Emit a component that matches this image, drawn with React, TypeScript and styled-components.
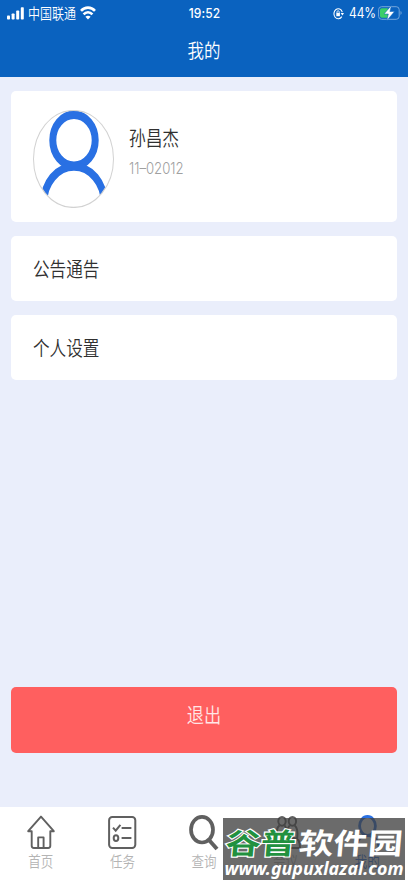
import React from "react";
import styled, { createGlobalStyle } from "styled-components";

const GlobalStyle = createGlobalStyle`
  * { box-sizing: border-box; }
  body {
    margin: 0;
    background: #eaeefb;
    font-family: "Noto Sans CJK SC", "Liberation Sans", sans-serif;
  }
`;

const Screen = styled.div`
  position: relative;
  display: flex;
  flex-direction: column;
  width: 408px;
  height: 883px;
  overflow: hidden;
  background: #eaeefb;
`;

const Header = styled.header`
  height: 77px;
  flex: none;
  background: #0a62bf;
  color: #fff;
`;

const StatusBar = styled.div`
  display: grid;
  grid-template-columns: 1fr auto 1fr;
  align-items: center;
  height: 26px;
  padding: 0 6px 0 7px;
`;

const StatusGroup = styled.div<{ $end?: boolean }>`
  display: flex;
  align-items: center;
  justify-content: ${(p) => (p.$end ? "flex-end" : "flex-start")};
  gap: 4px;
`;

const PowerGroup = styled(StatusGroup)`
  gap: 2px;

  svg:first-child { margin-right: 3px; }
`;

const Label = styled.span<{
  $size: number;
  $color?: string;
  $weight?: number;
  $stretch?: number;
  $latin?: boolean;
  $spacing?: number;
}>`
  display: block;
  font-size: ${(p) => p.$size}px;
  line-height: 24px;
  font-weight: ${(p) => p.$weight ?? 350};
  letter-spacing: ${(p) => p.$spacing ?? 0}px;
  color: ${(p) => p.$color ?? "#fff"};
  white-space: nowrap;
  transform: scaleY(${(p) => p.$stretch ?? 1.2});
  ${(p) => (p.$latin ? 'font-family: Inter, "Liberation Sans", sans-serif;' : "")}
`;

const TitleBar = styled.div`
  display: flex;
  justify-content: center;
  padding-top: 11.5px;
`;

const Content = styled.main`
  display: flex;
  flex-direction: column;
  flex: 1;
  gap: 13.5px;
  padding: 13.5px 11px 54px;
`;

const Card = styled.section`
  display: flex;
  align-items: center;
  height: 65.5px;
  padding: 2px 22px 0;
  border-radius: 5px;
  background: #fff;
`;

const ProfileCard = styled(Card)`
  height: 131.5px;
  align-items: flex-start;
  padding-top: 19px;
  gap: 15px;
`;

const Identity = styled.div`
  display: flex;
  flex-direction: column;
  gap: 6px;
  padding-top: 16.5px;
`;

const Logout = styled.button`
  display: flex;
  justify-content: center;
  height: 66px;
  margin-top: auto;
  padding: 17.5px 0 0;
  border: 0;
  border-radius: 5px;
  background: #ff5f5f;
  font-family: inherit;
`;

const TabBar = styled.nav`
  display: grid;
  grid-template-columns: repeat(5, 1fr);
  height: 76px;
  flex: none;
  background: #fff;
`;

const Tab = styled.div`
  display: flex;
  flex-direction: column;
  align-items: center;
  padding-top: 7.5px;

  svg { height: 37px; }
  span { margin-top: -2.5px; }
`;

const Watermark = styled.div`
  position: absolute;
  left: 223px;
  top: 818px;
  width: 182px;
  height: 62px;
  background: rgba(62, 62, 62, 0.77);

  svg { display: block; overflow: visible; }
`;

const Signal = () => (
  <svg width="17" height="13" viewBox="0 0 17 13" fill="#fff">
    <rect x="0" y="8.6" width="3" height="4" rx="0.8" />
    <rect x="4.6" y="6.4" width="3" height="6.2" rx="0.8" />
    <rect x="9.2" y="3.4" width="3" height="9.2" rx="0.8" />
    <rect x="13.8" y="0.2" width="3" height="12.4" rx="0.8" />
  </svg>
);

const Wifi = () => (
  <svg width="16" height="14" viewBox="0 0 16 14" fill="none" stroke="#fff" strokeWidth="2.6">
    <path d="M1 4.8C4.9.5 11.1.5 15 4.8" />
    <path d="M3.6 8.3c2.5-2.8 6.3-2.8 8.8 0" />
    <path d="M8 13.5 5.4 10.7c1.5-1.4 3.7-1.4 5.2 0Z" fill="#fff" stroke="none" />
  </svg>
);

const RotationLock = () => (
  <svg width="11" height="13" viewBox="0 0 11 13" fill="none" stroke="#fff" strokeWidth="1.1">
    <path d="M8.8 9.6A4.3 5 0 1 1 9.3 5.2" />
    <path d="M7.6 6h3.4L9.4 8.6Z" fill="#fff" stroke="none" />
    <rect x="3.3" y="5.9" width="3.6" height="3.3" fill="#fff" stroke="none" />
    <path d="M4 6V4.9a1.1 1.2 0 0 1 2.2 0V6" strokeWidth=".8" />
  </svg>
);

const Battery = () => (
  <svg width="24" height="16" viewBox="0 0 24 16">
    <rect x=".6" y="1.7" width="20.6" height="12.6" rx="3" fill="none" stroke="#75a7dc" />
    <path d="M3.8 3.3h6v9.4h-6A1.8 1.8 0 0 1 2 10.9V5.1a1.8 1.8 0 0 1 1.8-1.8Z" fill="#3bce68" />
    <path d="M22.5 6c1.5.7 1.5 3.2 0 3.9Z" fill="#75a7dc" />
    <path d="M13.4.4 6 9h4.3L8.9 15.5 16.5 6.5h-4.6Z" fill="#fff" stroke="#0a62bf" strokeWidth=".5" />
  </svg>
);

const Avatar = () => (
  <svg width="81" height="98" viewBox="0 0 81 81.67" preserveAspectRatio="none">
    <defs>
      <clipPath id="avatarClip"><ellipse cx="40.5" cy="40.8" rx="40" ry="40.4" /></clipPath>
    </defs>
    <g clipPath="url(#avatarClip)" fill="none" stroke="#2970e3" strokeWidth="7">
      <circle cx="41" cy="25.2" r="21.2" />
      <circle cx="41" cy="77.4" r="30.2" />
    </g>
    <ellipse cx="40.5" cy="40.8" rx="40" ry="40.4" fill="none" stroke="#d2d2d2" strokeWidth="1" />
  </svg>
);

const HomeIcon = () => (
  <svg width="30" viewBox="0 0 30 37" fill="none" stroke="#606060" strokeWidth="1.9" strokeLinejoin="round">
    <path d="M5.7 16.2H2.2L15 1.6l12.8 14.6h-3.5v14.6c0 1.4-.8 2.2-2.2 2.2H7.9c-1.4 0-2.2-.8-2.2-2.2Z" />
    <path d="M12.2 33V22.4h5.4V33" />
  </svg>
);

const TasksIcon = () => (
  <svg width="30" viewBox="0 0 30 37" fill="none" stroke="#606060" strokeWidth="2">
    <rect x="2.1" y="2.1" width="26.2" height="30.8" rx="3.2" />
    <path d="m6 12.6 2.7 3 4.7-5.8M14.6 13h9.8M14.6 23h9.8" />
    <ellipse cx="9" cy="23.1" rx="2.3" ry="2.9" />
  </svg>
);

const SearchIcon = () => (
  <svg width="30" viewBox="0 0 30 37" fill="none" stroke="#606060" strokeWidth="3.7">
    <ellipse cx="13" cy="14.7" rx="11" ry="12.8" />
    <path d="m20 25 8 9" strokeWidth="4" />
  </svg>
);

const MeetingIcon = () => (
  <svg width="30" viewBox="0 0 30 37" fill="none" stroke="#606060" strokeWidth="2">
    <ellipse cx="11" cy="6.3" rx="3.7" ry="4.4" />
    <ellipse cx="21.4" cy="6.3" rx="3.7" ry="4.4" />
    <path d="M8.5 10.4C5 13 5.5 20 6 24M13.5 10.4c2 2 2.5 4 2.6 7 .1-3 .6-5 2.6-7M23.7 10.4c3.5 3 3 9 2.5 13M3 33c0-7 3-10 7-10s6 3 6 10c0-7 3-10 7-10s6 3 6 10Z" />
  </svg>
);

const MineIcon = () => (
  <svg width="30" viewBox="0 0 30 37" fill="none" stroke="#2970e3" strokeWidth="2.8">
    <ellipse cx="15.5" cy="11" rx="7.9" ry="9.5" />
    <path d="M4 32c1.5-15.5 21.5-15.5 23 0" />
  </svg>
);

const tabs = [
  { name: "首页", Icon: HomeIcon },
  { name: "任务", Icon: TasksIcon },
  { name: "查询", Icon: SearchIcon },
  { name: "会议", Icon: MeetingIcon },
  { name: "我的", Icon: MineIcon, active: true },
];

export default function App() {
  return (
    <Screen>
      <GlobalStyle />
      <Header>
        <StatusBar>
          <StatusGroup>
            <Signal />
            <Label $size={12}>中国联通</Label>
            <Wifi />
          </StatusGroup>
          <Label $size={12} $weight={500} $stretch={1.14} $latin $spacing={0.15}>19:52</Label>
          <PowerGroup $end>
            <RotationLock />
            <Label $size={12} $weight={400} $stretch={1.15} $latin $spacing={-0.1}>44%</Label>
            <Battery />
          </PowerGroup>
        </StatusBar>
        <TitleBar><Label $size={16.5}>我的</Label></TitleBar>
      </Header>

      <Content>
        <ProfileCard>
          <Avatar />
          <Identity>
            <Label $size={16.7} $color="#303030">孙昌杰</Label>
            <Label $size={13.2} $color="#a0a0a0" $stretch={1.2} $latin>11–02012</Label>
          </Identity>
        </ProfileCard>
        <Card><Label $size={16.6} $color="#303030">公告通告</Label></Card>
        <Card><Label $size={16.6} $color="#303030">个人设置</Label></Card>
        <Logout><Label $size={17.2} $color="#ffe7e7">退出</Label></Logout>
      </Content>

      <TabBar>
        {tabs.map(({ name, Icon, active }) => (
          <Tab key={name}>
            <Icon />
            <Label $size={12.5} $color={active ? "#2970e3" : "#b4b4b4"}>{name}</Label>
          </Tab>
        ))}
      </TabBar>

      <Watermark>
        <svg width="182" height="62" viewBox="0 0 182 62">
          <g
            fontFamily='"Noto Sans CJK SC", sans-serif'
            fontWeight="700"
            fontSize="29"
            transform="translate(-1 36) skewX(-5)"
            paintOrder="stroke"
          >
            <text x="3" y="0" textLength="70" lengthAdjust="spacingAndGlyphs" fill="#21913f" stroke="#fff" strokeWidth="2.2">谷普</text>
            <text x="76" y="0" textLength="104" lengthAdjust="spacingAndGlyphs" fill="#fff">软件园</text>
          </g>
          <text
            x="1.5"
            y="56.5"
            textLength="179"
            lengthAdjust="spacingAndGlyphs"
            fontFamily='"Noto Sans", "Open Sans", sans-serif'
            fontWeight="700"
            fontStyle="italic"
            fontSize="18.5"
            fill="#fff"
          >
            www.gupuxlazal.com
          </text>
        </svg>
      </Watermark>
    </Screen>
  );
}
